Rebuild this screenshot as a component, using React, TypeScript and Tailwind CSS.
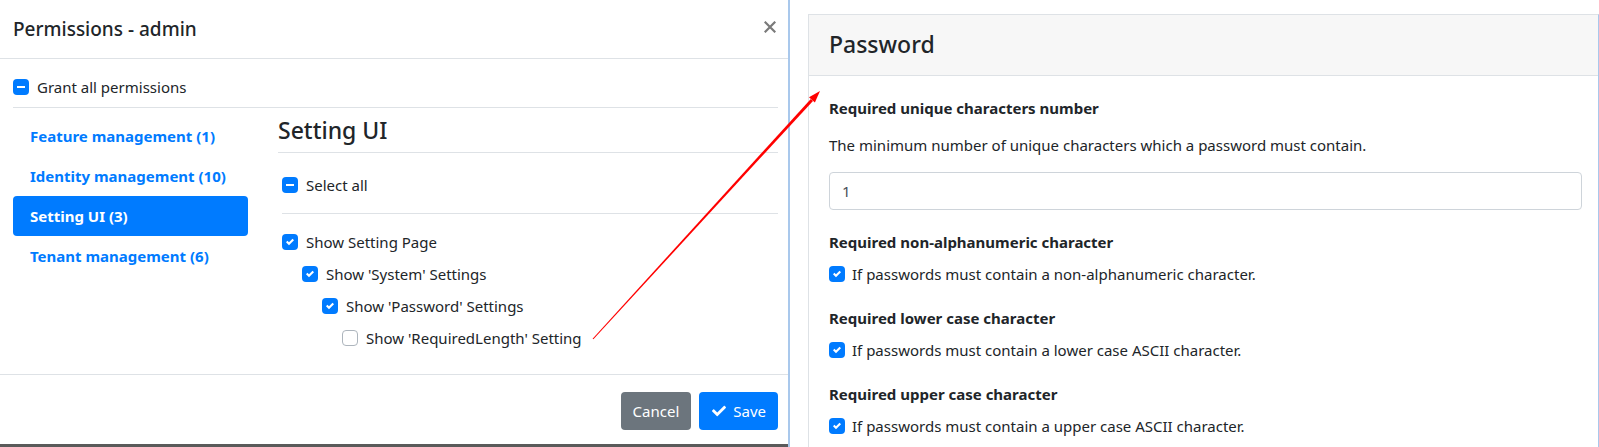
import React from "react";

type CbState = "checked" | "indeterminate" | "unchecked";

function Checkbox({ state }: { state: CbState }) {
  if (state === "unchecked") {
    return <span className="w-4 h-4 shrink-0 rounded-[4px] border border-[#adb5bd] bg-white" />;
  }
  return (
    <span className="w-4 h-4 shrink-0 rounded-[4px] bg-[#007bff] flex items-center justify-center">
      {state === "checked" ? (
        <svg width="8" height="8" viewBox="0 0 8 8">
          <path fill="#fff" d="M6.564.75l-3.59 3.612-1.538-1.55L0 4.26l2.974 2.99L8 2.193z" />
        </svg>
      ) : (
        <span className="w-2 h-[2px] bg-white" />
      )}
    </span>
  );
}

function CheckRow({ state, label, indent = 0 }: { state: CbState; label: string; indent?: number }) {
  return (
    <div className="flex items-center h-6 gap-2" style={{ paddingLeft: indent }}>
      <Checkbox state={state} />
      <span>{label}</span>
    </div>
  );
}

function Group({ title, text }: { title: string; text: string }) {
  return (
    <div className="mb-5">
      <div className="h-6 flex items-center font-bold">{title}</div>
      <div className="mt-2 flex items-center h-6 gap-[7px]">
        <Checkbox state="checked" />
        <span>{text}</span>
      </div>
    </div>
  );
}

export default function App() {
  const font = { fontFamily: '"Noto Sans", "Open Sans", sans-serif' };
  return (
    <div className="relative w-[1599px] h-[447px] flex bg-white text-[#212529] text-[15px] overflow-hidden" style={font}>
      {/* Left modal */}
      <div className="w-[790px] h-full flex flex-col border-r-2 border-[#a9c8ec] bg-white">
        <div className="h-[59px] shrink-0 border-b border-[#dee2e6] flex items-center justify-between pl-[13px] pr-[12px]">
          <span className="text-[19px] font-medium">Permissions - admin</span>
          <svg width="12" height="12" viewBox="0 0 12 12" className="-mt-1">
            <path d="M1.5 1.5L10.5 10.5M10.5 1.5L1.5 10.5" stroke="#7a7a7a" strokeWidth="2.2" strokeLinecap="square" />
          </svg>
        </div>
        <div className="flex-1 pl-[13px] pr-[10px] pt-4">
          <div className="flex items-center h-6 gap-2">
            <Checkbox state="indeterminate" />
            <span>Grant all permissions</span>
          </div>
          <div className="mt-2 border-t border-[#dee2e6]" />
          <div className="flex mt-2">
            <div className="w-[235px] shrink-0 flex flex-col font-bold">
              <div className="h-10 flex items-center pl-[17px] text-[#007bff]">Feature management (1)</div>
              <div className="h-10 flex items-center pl-[17px] text-[#007bff]">Identity management (10)</div>
              <div className="h-10 flex items-center pl-[17px] text-white bg-[#007bff] rounded-[4px]">Setting UI (3)</div>
              <div className="h-10 flex items-center pl-[17px] text-[#007bff]">Tenant management (6)</div>
            </div>
            <div className="flex-1 ml-[30px]">
              <div className="text-[23px] font-medium leading-[29px] pb-[7px] border-b border-[#dee2e6]">Setting UI</div>
              <div className="pl-1">
                <div className="mt-5">
                  <CheckRow state="indeterminate" label="Select all" />
                </div>
                <div className="mt-4 border-t border-[#dee2e6]" />
                <div className="mt-4 flex flex-col gap-2">
                  <CheckRow state="checked" label="Show Setting Page" />
                  <CheckRow state="checked" label="Show 'System' Settings" indent={20} />
                  <CheckRow state="checked" label="Show 'Password' Settings" indent={40} />
                  <CheckRow state="unchecked" label="Show 'RequiredLength' Setting" indent={60} />
                </div>
              </div>
            </div>
          </div>
        </div>
        <div className="h-[70px] shrink-0 border-t border-[#dee2e6] flex items-start justify-end gap-2 pr-[10px] pt-[17px]">
          <button className="h-[38px] px-3 rounded-[4px] bg-[#6c757d] text-white text-[15px]">Cancel</button>
          <button className="h-[38px] px-3 rounded-[4px] bg-[#007bff] text-white text-[15px] flex items-center gap-[6px]">
            <svg width="16" height="14" viewBox="0 0 512 512">
              <path fill="#fff" d="M173.9 439.4l-166.4-166.4c-10-10-10-26.2 0-36.2l36.2-36.2c10-10 26.2-10 36.2 0L192 312.7 432.1 72.6c10-10 26.2-10 36.2 0l36.2 36.2c10 10 10 26.2 0 36.2L210.1 439.4c-10 10-26.2 10-36.2 0z" />
            </svg>
            Save
          </button>
        </div>
        <div className="h-[3px] shrink-0 bg-[#5a5a5a]" />
      </div>

      {/* Right panel */}
      <div className="flex-1 h-full pl-[18px] pt-[14px] bg-white">
        <div className="h-full border-t border-l border-[#dee2e6] border-r border-r-[#a9c8ec]">
          <div className="h-[61px] bg-[#f7f7f7] border-b border-[#dee2e6] flex items-center pl-5 pb-[2px]">
            <span className="text-[23px] font-medium">Password</span>
          </div>
          <div className="pl-5 pr-[16px] pt-5">
            <div className="h-6 flex items-center font-bold">Required unique characters number</div>
            <div className="mt-[13px] h-6 flex items-center">The minimum number of unique characters which a password must contain.</div>
            <div className="mt-[15px] h-[38px] border border-[#ced4da] rounded-[4px] flex items-center px-3 text-[#495057]">1</div>
            <div className="mt-5">
              <Group title="Required non-alphanumeric character" text="If passwords must contain a non-alphanumeric character." />
              <Group title="Required lower case character" text="If passwords must contain a lower case ASCII character." />
              <Group title="Required upper case character" text="If passwords must contain a upper case ASCII character." />
            </div>
          </div>
        </div>
      </div>

      {/* Red arrow overlay */}
      <svg className="absolute inset-0 pointer-events-none" width="1599" height="447">
        <polygon fill="#ff0000" points="593.4,339.3 592.6,338.7 810.8,98.9 813.0,100.9" />
        <polygon fill="#ff0000" points="820,91 814.9,102.6 809.0,97.2" />
      </svg>
    </div>
  );
}
